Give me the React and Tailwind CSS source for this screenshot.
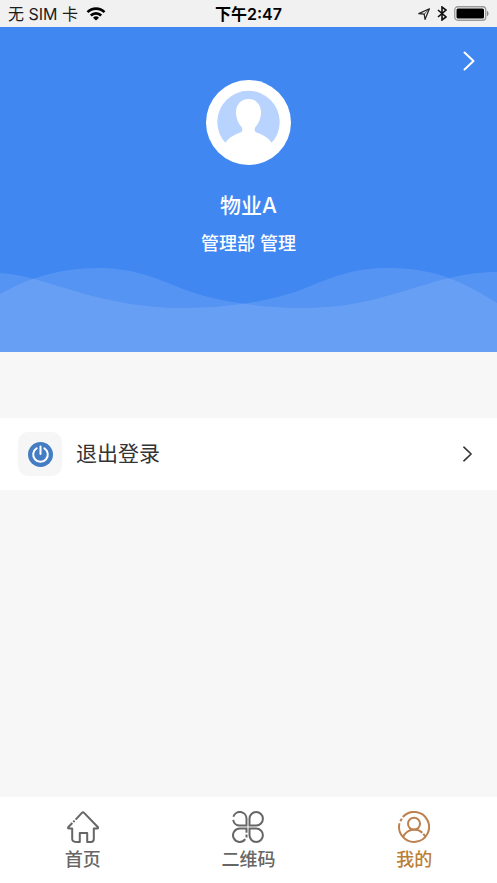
import { useState } from 'react';

function StatusBar() {
  return (
    <div className="grid grid-cols-3 items-center h-[27px] pl-2 pr-2 bg-[#f1f1f1] text-base leading-6 text-[#1c1c1c]">
      <div className="flex items-center gap-2">
        <span>无 SIM 卡</span>
        <svg className="w-5 h-[14px]" viewBox="0 0 20 14" fill="none" stroke="#000" strokeWidth="2.6">
          <path d="M1.5 5.2a12 12 0 0 1 17 0" />
          <path d="M4.8 8.5a7.4 7.4 0 0 1 10.4 0" />
          <path d="M10 13.6 7 10.7a4.3 4.3 0 0 1 6 0z" fill="#000" stroke="none" />
        </svg>
      </div>
      <span className="text-center font-semibold text-black">下午2:47</span>
      <div className="flex items-center justify-end gap-[7px]">
        <svg className="w-3 h-3" viewBox="0 0 12 12" fill="none" stroke="#222" strokeWidth="1.2" strokeLinejoin="round">
          <path d="M11.4.8 7 11.4 6.2 6.2.8 5.600z" />
          <path d="M11.4.8 6.2 6.2" strokeWidth=".8" />
        </svg>
        <svg className="w-[10px] h-[15px]" viewBox="0 0 10 15" fill="none" stroke="#111" strokeWidth="1.6">
          <path d="M1 4l8 7-4 3V1l4 3-8 7" />
        </svg>
        <svg className="w-[35px] h-[15px]" viewBox="0 0 35 15">
          <rect x=".75" y=".75" width="31" height="13.5" rx="3" fill="#f4f4f4" stroke="#999" strokeWidth="1.3" />
          <rect x="2.5" y="2.5" width="27.5" height="10" rx="1.5" fill="#000" />
          <path d="M33 5c2 .5 2 4.500 0 5z" fill="#888" />
        </svg>
      </div>
    </div>
  );
}

function Chevron({ className }) {
  return (
    <svg className={className} viewBox="0 0 12 20" fill="none" stroke="currentColor" strokeLinecap="round" strokeLinejoin="round">
      <path d="M1.500 1.500 10.500 10l-9 8.500" />
    </svg>
  );
}

function Avatar() {
  return (
    <svg className="w-[85px] h-[85px]" viewBox="0 0 85 85">
      <circle cx="42.500" cy="42.500" r="42.500" fill="#fff" />
      <circle cx="42.500" cy="42" r="31.200" fill="#b8d3fd" />
      <path
        d="M42.500 19c-7.500 0-12.500 5.500-12.500 13.500 0 6 2.500 11 5.600 14.600 1 1.400 1 4-.2 5-1 .9-3.400 1.300-5.400 2.200-4.500 2-8.200 4.700-10.800 8.700V76h46.600V63c-2.600-4-6.300-6.700-10.800-8.700-2-.9-4.400-1.300-5.400-2.200-1.200-1-1.200-3.600-.2-5C52.500 43.500 55 38.500 55 32.500 55 24.500 50 19 42.500 19z"
        fill="#fff"
      />
    </svg>
  );
}

function Waves() {
  return (
    <svg className="block w-full h-[84px]" viewBox="0 0 497 84" preserveAspectRatio="none" fill="#fff">
      <path d="M0 26C32 8 64 0 97 0c33 0 55 8 81 19 26 11 72 21 125 21C390 40 430 4 497 4v80H0z" fillOpacity=".11" />
      <path d="M0 5c45 2 95 35 183 35 53 0 99-10 125-21C334 8 356 0 387 0c43 0 68 9 110 35v49H0z" fillOpacity=".11" />
    </svg>
  );
}

function PowerIcon() {
  return (
    <svg className="w-[25px] h-[25px]" viewBox="0 0 25 25" fill="none" stroke="#fff" strokeWidth="2" strokeLinecap="round">
      <circle cx="12.500" cy="12.500" r="12.500" fill="#447dc3" stroke="none" />
      <path d="M12.500 4.500v7.500M8.600 6.300a7.300 7.300 0 1 0 7.800 0" />
    </svg>
  );
}

function HomeIcon() {
  return (
    <svg className="w-8 h-8" viewBox="0 0 32 32" fill="none" stroke="currentColor" strokeWidth="2" strokeLinejoin="round">
      <path d="M8.600 8.600 14.900 1.900q1.100-1.100 2.200 0L31 16.300q.3 1.200-.8 1.200h-3.400V28q0 3-3 3H20.200V22h-7.400v9h-2.600q-5 0-5-3V17.500H2q-1.300 0-.8-1.200L5.300 12" />
      <path d="M6.300 11 7.600 9.600" />
    </svg>
  );
}

function CodeIcon() {
  return (
    <svg className="w-8 h-8" viewBox="0 0 32 32" fill="none" stroke="currentColor" strokeWidth="2">
      <path d="M1.400 5.700A6.700 6.700 0 0 1 14.500 7.800V14.500H7.800A6.700 6.700 0 0 1 1.200 8.800" />
      <path d="M17.500 14.500V7.800a6.700 6.700 0 1 1 6.700 6.700z" />
      <path d="M17.500 17.500h6.700a6.700 6.700 0 1 1-6.700 6.700z" />
      <path d="M14.500 21.800v-4.300H7.800a6.700 6.700 0 1 0 5.400 10.600M14.500 23.500v3" />
    </svg>
  );
}

function UserIcon() {
  return (
    <svg className="w-8 h-8" viewBox="0 0 32 32" fill="none" stroke="currentColor" strokeWidth="2">
      <path d="M4.800 6A15 15 0 1 1 1.500 12.300M2.400 10.300l1.400-2.700" />
      <circle cx="16" cy="12.700" r="6" />
      <path d="M5 26C9.500 17 19.500 17 24.300 21.800M25.300 22.800l2 2.600" />
    </svg>
  );
}

const tabs = [
  { key: 'home', label: '首页', Icon: HomeIcon },
  { key: 'code', label: '二维码', Icon: CodeIcon },
  { key: 'mine', label: '我的', Icon: UserIcon },
];

export default function App() {
  const [active, setActive] = useState('mine');

  return (
    <div className="min-h-screen flex flex-col bg-[#f7f7f7] font-['Inter','Noto_Sans_CJK_SC',sans-serif]">
      <StatusBar />

      {/* Profile */}
      <header className="relative flex flex-col items-center pt-[53px] bg-[#4087f2] text-white">
        <button type="button" aria-label="个人资料" className="absolute top-6 right-[22px]">
          <Chevron className="w-3 h-5 stroke-2" />
        </button>
        <Avatar />
        <h1 className="mt-[25px] text-[21px] leading-8 font-medium">物业A</h1>
        <p className="mt-2 mb-[10px] text-[18px] leading-7 font-medium">管理部 管理</p>
        <Waves />
      </header>

      {/* Menu */}
      <main className="flex-1 pt-[66px]">
        <button type="button" className="flex items-center w-full h-[72px] pl-[18px] pr-6 bg-white text-[#333]">
          <span className="flex items-center justify-center w-11 h-11 rounded-[10px] bg-[#f6f6f6]">
            <PowerIcon />
          </span>
          <span className="ml-[14px] text-[21px] leading-8">退出登录</span>
          <Chevron className="w-[11px] h-4 ml-auto stroke-2" />
        </button>
      </main>

      {/* Tab bar */}
      <nav className="grid grid-cols-3 h-[86px] bg-white">
        {tabs.map(({ key, label, Icon }) => (
          <button
            key={key}
            type="button"
            onClick={() => setActive(key)}
            className={`flex flex-col items-center pt-[14px] ${active === key ? 'text-[#bd8150]' : 'text-[#666]'}`}
          >
            <Icon />
            <span className={`text-[18px] leading-[34px] font-medium ${active === key ? 'text-[#bb8036]' : ''}`}>{label}</span>
          </button>
        ))}
      </nav>
    </div>
  );
}
